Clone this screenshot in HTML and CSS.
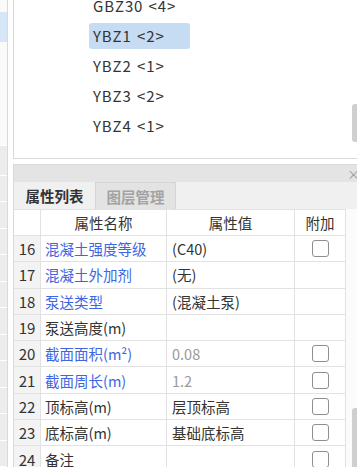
FILE: index.html
```html
<!DOCTYPE html>
<html lang="zh-CN">
<head>
  <meta charset="UTF-8">
  <title>属性列表</title>
  <link rel="stylesheet" href="styles.css">
</head>
<body>
  <div class="app">

    <!-- Left dock strip -->
    <div class="side">
      <div class="side-top"><div class="side-sel"></div></div>
      <div class="side-row first"></div>
      <div class="side-row"></div>
      <div class="side-row"></div>
      <div class="side-row"></div>
      <div class="side-row"></div>
      <div class="side-row"></div>
      <div class="side-row"></div>
      <div class="side-row"></div>
      <div class="side-row"></div>
      <div class="side-row"></div>
      <div class="side-row"></div>
      <div class="side-row"></div>
    </div>

    <div class="main">

      <!-- Component tree (scrolled) -->
      <div class="tree-panel">
        <ul class="tree">
          <li><span class="node">GBZ30 &lt;4&gt;</span></li>
          <li><span class="node selected">YBZ1 &lt;2&gt;</span></li>
          <li><span class="node">YBZ2 &lt;1&gt;</span></li>
          <li><span class="node">YBZ3 &lt;2&gt;</span></li>
          <li><span class="node">YBZ4 &lt;1&gt;</span></li>
        </ul>
        <div class="thumb thumb-tree"></div>
      </div>

      <!-- Property panel -->
      <div class="prop-panel">
        <div class="prop-title"><span class="close">×</span></div>
        <div class="tabs">
          <div class="tab active">属性列表</div>
          <div class="tab">图层管理</div>
        </div>

        <div class="prop-body">
          <div class="grid">
            <div class="cell num head"></div>
            <div class="cell head">属性名称</div>
            <div class="cell head">属性值</div>
            <div class="cell head">附加</div>

            <div class="cell num">16</div>
            <div class="cell name link">混凝土强度等级</div>
            <div class="cell val">(C40)</div>
            <div class="cell chk"><span class="box"></span></div>

            <div class="cell num">17</div>
            <div class="cell name link">混凝土外加剂</div>
            <div class="cell val">(无)</div>
            <div class="cell chk"></div>

            <div class="cell num">18</div>
            <div class="cell name link">泵送类型</div>
            <div class="cell val">(混凝土泵)</div>
            <div class="cell chk"></div>

            <div class="cell num">19</div>
            <div class="cell name">泵送高度(m)</div>
            <div class="cell val"></div>
            <div class="cell chk"></div>

            <div class="cell num">20</div>
            <div class="cell name link">截面面积(m²)</div>
            <div class="cell val muted">0.08</div>
            <div class="cell chk"><span class="box"></span></div>

            <div class="cell num">21</div>
            <div class="cell name link">截面周长(m)</div>
            <div class="cell val muted">1.2</div>
            <div class="cell chk"><span class="box"></span></div>

            <div class="cell num">22</div>
            <div class="cell name">顶标高(m)</div>
            <div class="cell val">层顶标高</div>
            <div class="cell chk"><span class="box"></span></div>

            <div class="cell num">23</div>
            <div class="cell name">底标高(m)</div>
            <div class="cell val">基础底标高</div>
            <div class="cell chk"><span class="box"></span></div>

            <div class="cell num">24</div>
            <div class="cell name">备注</div>
            <div class="cell val"></div>
            <div class="cell chk"><span class="box"></span></div>
          </div>

          <div class="vscroll"><div class="thumb thumb-grid"></div></div>
        </div>
      </div>
    </div>
  </div>
</body>
</html>
```

FILE: styles.css
```css
/* === Palette === */
:root {
  --line: #d9d9d9;
  --grid-line: #e2e2e2;
  --panel-gray: #f0f0f0;
  --title-gray: #e4e4e4;
  --text: #333;
  --link: #3d66e3;
  --muted: #9a9a9a;
  --select: #c6dcf3;
  --thumb: #cfcfcf;
  --font: "Noto Sans CJK SC", "Noto Sans", sans-serif;
}

* {
  box-sizing: border-box;
  margin: 0;
  padding: 0;
}
html, body {
  width: 357px;
  height: 467px;
  overflow: hidden;
  background: #fff;
  font-family: var(--font);
  color: var(--text);
}

.app {
  display: flex;
  height: 467px;
}

/* === Left dock strip === */
.side {
  width: 8px;
  border-right: 1px solid var(--line);
  display: flex;
  flex-direction: column;
}
.side-top {
  height: 152px;
  padding-top: 12px;
  background: #fafafa;
  border-bottom: 1px solid #fff;
}
.side-sel {
  height: 30px;
  background: #d6e6f7;
}
.side-row {
  height: 26.5px;
  flex-shrink: 0;
  background: #ececec;
  border-bottom: 1px solid #fff;
}
.side-row.first {
  height: 30px;
}

.main {
  flex: 1;
  margin-left: 5px;
  display: flex;
  flex-direction: column;
  min-width: 0;
}

/* === Component tree === */
.tree-panel {
  position: relative;
  height: 159px;
  border-left: 1px solid var(--line);
  border-bottom: 1px solid var(--line);
  overflow: hidden;
}
.tree {
  list-style: none;
  margin-top: -9px;
  padding-left: 75px;
}
.tree li {
  height: 30px;
  padding: 2px 0;
}
.node {
  display: block;
  width: 101px;
  height: 26px;
  line-height: 26px;
  padding-left: 4px;
  border-radius: 3px;
  font-size: 15px;
  letter-spacing: 0.9px;
  word-spacing: 1px;
  white-space: nowrap;
}
.node.selected {
  background: var(--select);
}

.thumb {
  position: absolute;
  right: 0;
  width: 5px;
  background: var(--thumb);
  border-radius: 3px 0 0 3px;
}
.thumb-tree {
  top: 104px;
  height: 38px;
}

/* === Property panel === */
.prop-panel {
  flex: 1;
  margin-top: 5px;
  border-left: 1px solid var(--line);
  border-top: 1px solid var(--line);
  display: flex;
  flex-direction: column;
  min-height: 0;
}
.prop-title {
  height: 17px;
  background: var(--title-gray);
  display: flex;
  justify-content: flex-end;
  align-items: center;
}
.close {
  font-size: 13px;
  line-height: 1;
  color: #9a9a9a;
  margin-right: -3px;
}

.tabs {
  height: 27px;
  display: flex;
  background: var(--panel-gray);
}
.tab {
  width: 81px;
  display: flex;
  align-items: center;
  justify-content: center;
  font-size: 14.5px;
  font-weight: bold;
  color: #a3a3a3;
  background: #e3e3e3;
  border: 1px solid #d4d4d4;
  border-bottom: none;
}
.tab.active {
  color: #333;
  background: var(--panel-gray);
  border: none;
}

.prop-body {
  flex: 1;
  display: flex;
  min-height: 0;
  overflow: hidden;
}

.grid {
  display: grid;
  grid-template-columns: 27px 126px 128px 51px;
  grid-auto-rows: 26.3px;
  grid-template-rows: 26px;
  border-top: 1px solid var(--grid-line);
  align-content: start;
}
.cell {
  display: flex;
  align-items: center;
  border-right: 1px solid var(--grid-line);
  border-bottom: 1px solid var(--grid-line);
  font-size: 14.5px;
  white-space: nowrap;
  overflow: hidden;
  background: #fff;
}
.cell.head {
  justify-content: center;
}
.cell.num {
  justify-content: center;
  background: #f3f3f3;
  font-size: 15px;
}
.cell.num.head {
  background: #fff;
}
.cell.name {
  padding-left: 4px;
}
.cell.val {
  padding-left: 5px;
}
.cell.link {
  color: var(--link);
}
.cell.muted {
  color: var(--muted);
}
.cell.chk {
  justify-content: center;
}
.box {
  width: 17px;
  height: 17px;
  border: 1.5px solid #8f8f8f;
  border-radius: 3px;
  background: #fff;
}

.vscroll {
  position: relative;
  flex: 1;
  background: #fbfbfb;
}
.thumb-grid {
  top: 199px;
  bottom: -10px;
}
```
